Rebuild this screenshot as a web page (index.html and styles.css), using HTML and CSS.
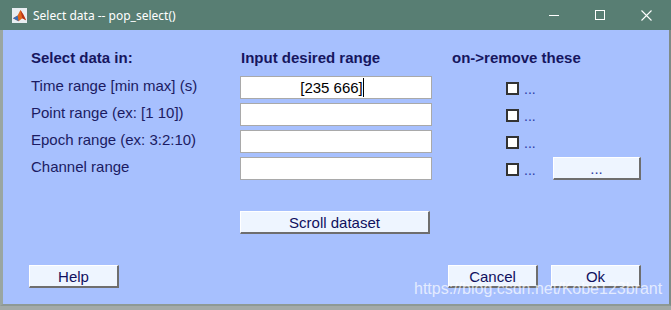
FILE: index.html
```html
<!DOCTYPE html>
<html lang="en">
  <head>
    <meta charset="UTF-8" />
    <title>Select data -- pop_select()</title>
    <link rel="stylesheet" href="styles.css">
  </head>
  <body>
    <div class="window">
      <div class="titlebar">
        <svg class="app-icon" viewBox="0 0 16 16">
          <rect x="0" y="0" width="16" height="16" fill="#e9eef2" />
          <path d="M1 11 L6 8 L9 2 L12 7 L15 13 L11 11 L7 14 Z" fill="#e2661b" />
          <path d="M9 2 L12 7 L15 13 L11 11 Z" fill="#b6341a" />
          <path d="M1 11 L6 8 L7 14 Z" fill="#3a6fb8" />
        </svg>
        <span class="title">Select data -- pop_select()</span>
        <div class="controls">
          <div class="ctrl"><span class="min"></span></div>
          <div class="ctrl"><span class="max"></span></div>
          <div class="ctrl">
            <svg width="11" height="11" viewBox="0 0 11 11">
              <path d="M0.5 0.5 L10.5 10.5 M10.5 0.5 L0.5 10.5" stroke="#fff" stroke-width="1.1" />
            </svg>
          </div>
        </div>
      </div>

      <div class="content">
        <div class="form">
          <div class="head">Select data in:</div>
          <div class="head head-input">Input desired range</div>
          <div class="head head-remove">on-&gt;remove these</div>

          <div class="label">Time range [min max] (s)</div>
          <div class="field">[235 666]<span class="caret"></span></div>
          <div class="check-cell"><span class="check"></span><span class="dots">...</span></div>

          <div class="label">Point range (ex: [1 10])</div>
          <div class="field"></div>
          <div class="check-cell"><span class="check"></span><span class="dots">...</span></div>

          <div class="label">Epoch range (ex: 3:2:10)</div>
          <div class="field"></div>
          <div class="check-cell"><span class="check"></span><span class="dots">...</span></div>

          <div class="label">Channel range</div>
          <div class="field"></div>
          <div class="check-cell"><span class="check"></span><span class="dots">...</span></div>
          <button class="btn btn-more">...</button>
        </div>

        <div class="scroll-row">
          <button class="btn btn-scroll">Scroll dataset</button>
        </div>

        <div class="footer">
          <button class="btn">Help</button>
          <button class="btn btn-cancel">Cancel</button>
          <button class="btn">Ok</button>
        </div>
      </div>

      <div class="watermark">https://blog.csdn.net/Kobe123brant</div>
    </div>
  </body>
</html>
```

FILE: styles.css
```css
body {
  margin: 0;
  font-family: "Liberation Sans", Arial, sans-serif;
  background-color: #a3aaa8;
}
.window {
  position: relative;
  width: 671px;
  height: 306px;
  display: flex;
  flex-direction: column;
}
.titlebar {
  height: 30px;
  background-color: #587e73;
  color: #fff;
  display: flex;
  align-items: center;
  padding-right: 2px;
}
.app-icon {
  margin-left: 12px;
  width: 15px;
  height: 15px;
}
.title {
  margin-left: 6px;
  font-family: "Noto Sans", "Open Sans", sans-serif;
  font-size: 12px;
}
.controls {
  margin-left: auto;
  display: flex;
}
.ctrl {
  width: 46px;
  height: 30px;
  display: flex;
  align-items: center;
  justify-content: center;
}
.min {
  width: 10px;
  height: 1px;
  background: #fff;
}
.max {
  width: 10px;
  height: 10px;
  box-sizing: border-box;
  border: 1px solid #fff;
}
.content {
  flex: 1;
  background-color: #a7c0fe;
  border-left: 3px solid #9aa6a2;
  border-right: 2px solid #7f8b87;
  border-bottom: 2px solid #8e9995;
  padding: 18px 28px 16px 26px;
  display: flex;
  flex-direction: column;
}
.form {
  margin-left: 2px;
  display: grid;
  grid-template-columns: 209px 192px 74px 47px 88px;
  grid-template-rows: 24px repeat(4, 23px);
  row-gap: 4px;
  align-items: center;
  font-size: 15px;
  color: #1b1b62;
}
.head {
  align-self: start;
  line-height: 20px;
  font-weight: bold;
  color: #16165f;
}
.head-input {
  padding-left: 1px;
}
.head-remove {
  grid-column: 3 / 6;
  padding-left: 20px;
}
.label {
  grid-column: 1;
  padding-bottom: 4px;
}
.field {
  grid-column: 2;
  box-sizing: border-box;
  height: 23px;
  border: 1px solid #a9a9a9;
  background: #fff;
  text-align: center;
  line-height: 21px;
  color: #000;
  padding-right: 8px;
}
.caret {
  display: inline-block;
  width: 1px;
  height: 19px;
  background: #000;
  vertical-align: -4px;
}
.check-cell {
  grid-column: 4;
  display: flex;
  align-items: center;
  gap: 5px;
  padding-top: 1px;
}
.check {
  width: 13px;
  height: 13px;
  box-sizing: border-box;
  border: 2px solid #333;
  background: #fff;
}
.dots {
  color: #2d3ca6;
  font-size: 14px;
  line-height: 14px;
  margin-top: 2px;
}
.btn {
  box-sizing: border-box;
  height: 23px;
  width: 90px;
  padding: 0;
  background: #eef5ff;
  border: none;
  border-top: 1px solid #fff;
  border-left: 1px solid #fff;
  border-right: 2px solid #6e6e6e;
  border-bottom: 2px solid #6e6e6e;
  font-family: "Liberation Sans", Arial, sans-serif;
  font-size: 15px;
  color: #10105e;
}
.btn-more {
  grid-column: 5;
  width: 88px;
  color: #2d3ca6;
}
.scroll-row {
  margin-top: 31px;
  padding-left: 211px;
}
.btn-scroll {
  width: 190px;
}
.footer {
  margin-top: auto;
  display: flex;
  gap: 13px;
}
.btn-cancel {
  margin-left: auto;
}
.watermark {
  position: absolute;
  left: 414px;
  top: 280px;
  font-size: 16px;
  color: rgba(255, 255, 255, 0.7);
}
```
